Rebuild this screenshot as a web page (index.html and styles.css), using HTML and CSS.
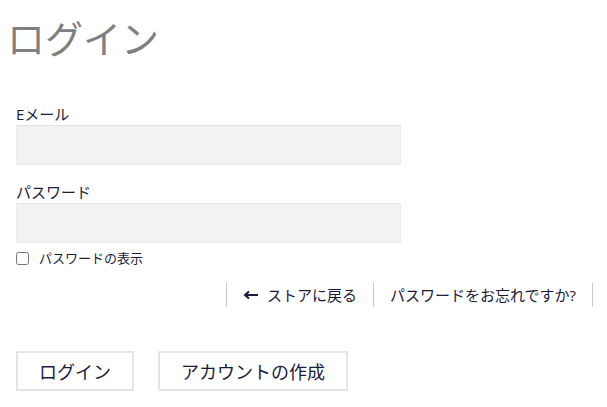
FILE: index.html
```html
<!DOCTYPE html>
<html lang="ja">
<head>
<meta charset="UTF-8">
<meta name="viewport" content="width=device-width, initial-scale=1.0">
<title>ログイン</title>
<link rel="stylesheet" href="styles.css">
</head>
<body>
    <h1 class="page-title">ログイン</h1>

    <form class="login-form">
        <div class="field">
            <label for="email">Eメール</label>
            <input type="email" id="email">
        </div>
        <div class="field">
            <label for="password">パスワード</label>
            <input type="password" id="password">
        </div>
        <label class="show-password">
            <input type="checkbox"> <span>パスワードの表示</span>
        </label>

        <div class="links">
            <a href="#">
                <svg class="arrow" width="15" height="10" viewBox="0 0 15 10"><path d="M15 5H3M6 1.5L2 5l4 3.5" fill="none" stroke="currentColor" stroke-width="2"/></svg>
                ストアに戻る
            </a>
            <a href="#">パスワードをお忘れですか?</a>
        </div>

        <div class="actions">
            <button type="button" class="btn">ログイン</button>
            <button type="button" class="btn">アカウントの作成</button>
        </div>
    </form>
</body>
</html>
```

FILE: styles.css
```css
body {
    font-family: "Open Sans", "Noto Sans CJK JP", sans-serif;
    color: #1c1c3a;
    margin: 0;
    padding: 0 16px;
}

.page-title {
    font-family: "Noto Sans CJK JP", sans-serif;
    font-weight: 400;
    font-size: 38px;
    color: #808080;
    margin: 11px 0 0 -9px;
    line-height: 52px;
}

.login-form {
    margin-top: 41px;
}

.field {
    margin-bottom: 17px;
}

.field label {
    display: block;
    font-size: 15px;
    line-height: 20px;
    margin-bottom: 1px;
}

.field input {
    display: block;
    box-sizing: border-box;
    width: 385px;
    height: 40px;
    background: #f2f2f2;
    border: 1px solid #ececec;
    border-top-color: #e2e2e2;
    margin: 0;
}

.show-password {
    display: flex;
    align-items: center;
    font-size: 13px;
    line-height: 20px;
    margin-top: -12px;
}

.show-password input {
    margin: 0 10px 0 0;
    width: 13px;
    height: 13px;
}

.links {
    display: flex;
    justify-content: flex-end;
    margin-top: 15px;
    margin-right: -2px;
}

.links a {
    display: flex;
    align-items: center;
    color: #1c1c3a;
    text-decoration: none;
    font-size: 15px;
    line-height: 24px;
    padding: 0 16px;
    border-left: 1px solid #c8c8c8;
}

.links a:last-child {
    border-right: 1px solid #c8c8c8;
}

.arrow {
    margin-right: 9px;
}

.actions {
    display: flex;
    gap: 24px;
    margin-top: 44px;
}

.btn {
    font-family: "Open Sans", "Noto Sans CJK JP", sans-serif;
    font-size: 18px;
    color: #1c1c3a;
    background: #fff;
    border: 2px solid #e5e5e5;
    height: 40px;
    padding: 0 21px;
    cursor: pointer;
}
```
